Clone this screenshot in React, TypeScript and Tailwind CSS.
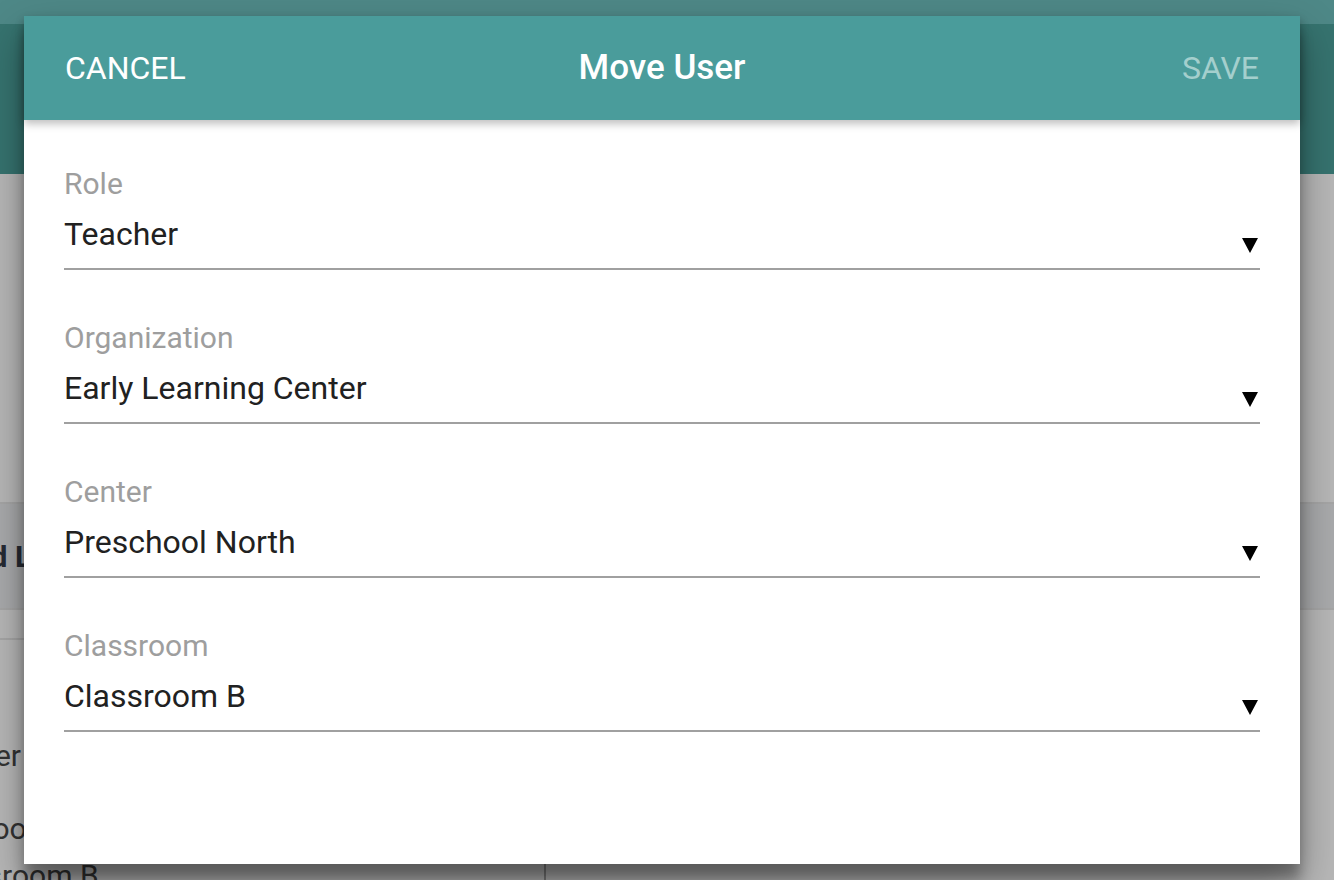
const fields = [
  { label: 'Role', value: 'Teacher' },
  { label: 'Organization', value: 'Early Learning Center' },
  { label: 'Center', value: 'Preschool North' },
  { label: 'Classroom', value: 'Classroom B' },
]

function Caret() {
  return (
    <svg width="16" height="15" viewBox="0 0 16 15" className="mb-[1px] shrink-0">
      <polygon points="0,0 16,0 8,15" fill="#000" />
    </svg>
  )
}

export default function App() {
  return (
    <div className="relative h-[880px] w-[1334px] overflow-hidden bg-[#b7b7b7] font-['Roboto',sans-serif]">
      {/* page behind the overlay */}
      <div className="h-[24px] bg-[#4e8887]" />
      <div className="h-[150px] bg-[#36736f]" />
      <div className="h-[328px]" />
      <div className="flex h-[108px] items-center border-y-2 border-[#a6a6a6] bg-[#a9aaac]">
        <span className="ml-[-58px] text-[30px] font-bold text-[#262a33]">Field L</span>
      </div>
      <div className="flex">
        <div className="w-[546px] border-r-2 border-[#7f7f7f]">
          <div className="h-[30px] border-b-2 border-[#a6a6a6]" />
          <div className="flex h-[138px] items-end">
            <span className="ml-[-86px] text-[30px] text-[#333]">Teacher</span>
          </div>
          <div className="flex h-[73px] items-end">
            <span className="ml-[-100px] text-[30px] text-[#333]">Preschool</span>
          </div>
          <div className="flex h-[47px] items-end">
            <span className="ml-[-72px] text-[30px] text-[#333]">Classroom B</span>
          </div>
        </div>
      </div>

      {/* dialog */}
      <div className="absolute left-[24px] top-[16px] flex h-[848px] w-[1276px] flex-col bg-white shadow-[0_19px_38px_rgba(0,0,0,0.35),0_15px_12px_rgba(0,0,0,0.3)]">
        <div className="relative z-10 flex h-[104px] items-center justify-between bg-[#4a9c9b] px-[41px] shadow-[0_4px_8px_rgba(0,0,0,0.25)]">
          <span className="w-[160px] text-[32px] text-white">CANCEL</span>
          <span className="text-[35px] font-medium text-white">Move User</span>
          <span className="w-[160px] text-right text-[32px] text-[#a4cfcd]">SAVE</span>
        </div>
        <div className="flex flex-col gap-[52px] px-[40px] pt-[48px]">
          {fields.map((f) => (
            <div key={f.label} className="flex flex-col">
              <div className="text-[30px] leading-[32px] text-[#9e9e9e]">{f.label}</div>
              <div className="mt-[14px] flex items-end justify-between border-b-2 border-[#a0a0a0] pb-[14px] pr-[2px]">
                <span className="text-[32px] leading-[40px] text-[#212121]">{f.value}</span>
                <Caret />
              </div>
            </div>
          ))}
        </div>
      </div>
    </div>
  )
}
